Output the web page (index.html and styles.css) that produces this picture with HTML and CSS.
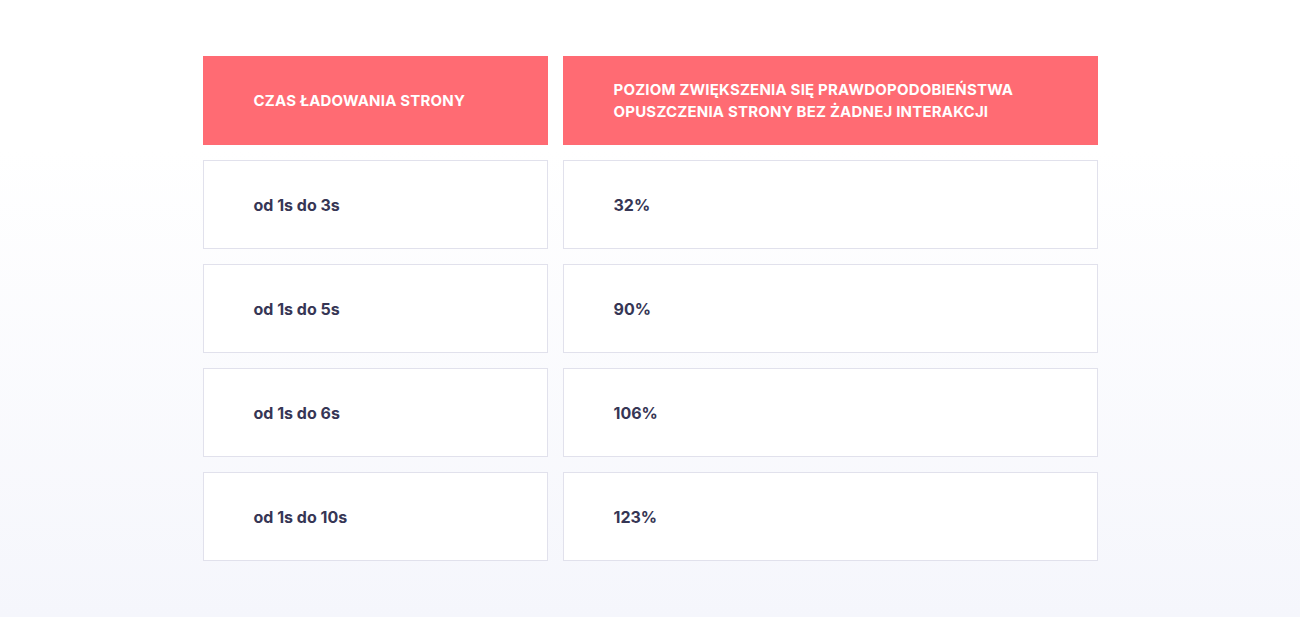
FILE: index.html
```html
<!DOCTYPE html>
<html>

<head>
    <meta charset="utf-8">
    <title>Czas ładowania strony</title>
    <link rel="stylesheet" href="styles.css">
</head>

<body>
    <div class="section">
        <div class="load-table">
            <!-- Header -->
            <div class="cell head">Czas ładowania strony</div>
            <div class="cell head">Poziom zwiększenia się prawdopodobieństwa<br>opuszczenia strony bez żadnej interakcji</div>

            <!-- Rows -->
            <div class="cell">od 1s do 3s</div>
            <div class="cell">32%</div>

            <div class="cell">od 1s do 5s</div>
            <div class="cell">90%</div>

            <div class="cell">od 1s do 6s</div>
            <div class="cell">106%</div>

            <div class="cell">od 1s do 10s</div>
            <div class="cell">123%</div>
        </div>
    </div>
</body>

</html>
```

FILE: styles.css
```css
/* Page background and font */
body {
    margin: 0;
    font-family: Inter, "Noto Sans", sans-serif;
    min-height: 617px;
    background: linear-gradient(to bottom, #ffffff 0px, #ffffff 150px, #f5f6fc 617px);
}

.section {
    padding: 56px 0 56px;
}

.load-table {
    display: grid;
    grid-template-columns: 345px 535px;
    grid-auto-rows: 89px;
    gap: 15px;
    width: 895px;
    margin: 0 auto;
}

.cell {
    display: flex;
    align-items: center;
    padding-left: 50px;
    background-color: #fff;
    border: 1px solid #e1e1ec;
    color: #363655;
    font-size: 16px;
    font-weight: 700;
}

.cell.head {
    background-color: #ff6b73;
    border-color: #ff6b73;
    color: #fff;
    font-size: 15px;
    letter-spacing: 0.2px;
    line-height: 22px;
    text-transform: uppercase;
}
```
